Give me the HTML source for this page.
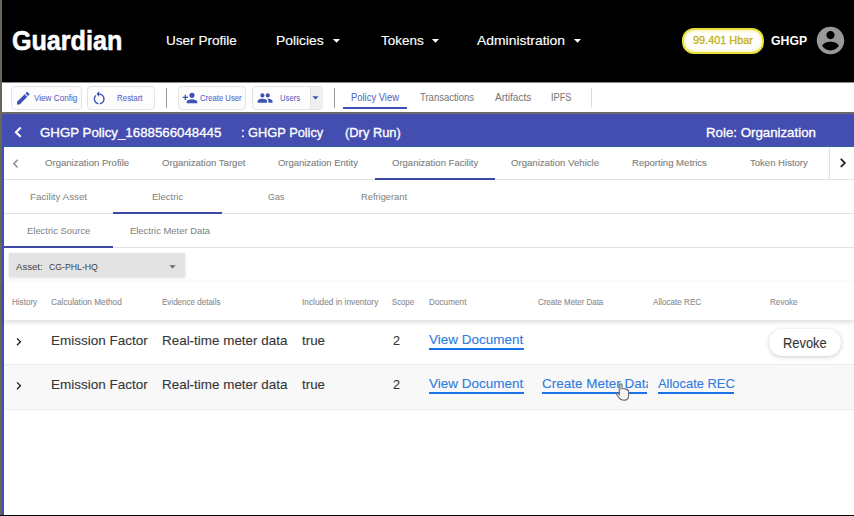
<!DOCTYPE html>
<html><head><meta charset="utf-8"><style>
html,body{margin:0;padding:0;width:854px;height:516px;overflow:hidden;background:#fff}
.t{position:absolute;font-family:"Liberation Sans",sans-serif;white-space:nowrap;line-height:1;transform-origin:0 0}
#w{position:absolute;left:0;top:0;width:854px;height:516px;overflow:hidden}
</style></head><body>
<div id="w">
<div style="position:absolute;left:0;top:0;width:2px;height:516px;background:#686559"></div>
<div style="position:absolute;left:2px;top:146px;width:2px;height:370px;background:#3c4fb8"></div>
<div style="position:absolute;left:2px;top:0;width:852px;height:82px;background:#000"></div>
<div style="position:absolute;left:2px;top:82px;width:852px;height:30px;background:#fff"></div>
<div style="position:absolute;left:2px;top:82px;width:852px;height:1px;background:#8a8a8a"></div>
<div style="position:absolute;left:2px;top:112px;width:852px;height:2px;background:#6a6a6a"></div>
<div style="position:absolute;left:2px;top:114px;width:852px;height:32px;background:#444eb0"></div>
<div style="position:absolute;left:2px;top:146px;width:852px;height:1px;background:#2a5f9e"></div>
<div style="position:absolute;left:4px;top:147px;width:850px;height:1px;background:#b9d2e6"></div>
<div style="position:absolute;left:4px;top:147px;width:850px;height:368px;background:#fff"></div>
<div style="position:absolute;left:0;top:515px;width:854px;height:1px;background:#000"></div>
<svg style="position:absolute;left:327.64000000000004px;top:31.8px;" width="17" height="17" viewBox="0 0 24 24"><path fill="#fff" d="M7 10l5 5 5-5z"/></svg>
<svg style="position:absolute;left:427.44px;top:31.8px;" width="17" height="17" viewBox="0 0 24 24"><path fill="#fff" d="M7 10l5 5 5-5z"/></svg>
<svg style="position:absolute;left:568.54px;top:31.8px;" width="17" height="17" viewBox="0 0 24 24"><path fill="#fff" d="M7 10l5 5 5-5z"/></svg>
<div style="position:absolute;left:681.5px;top:27.5px;width:78px;height:22px;border:2px solid #e6e03a;border-radius:12px;background:#fff;box-shadow:inset 0 0 3px 1px #f4f0a8"></div>
<svg style="position:absolute;left:813.5px;top:24.1px;" width="33" height="33" viewBox="0 0 24 24"><path fill="#999" d="M12 2C6.48 2 2 6.48 2 12s4.48 10 10 10 10-4.48 10-10S17.52 2 12 2zm0 3c1.66 0 3 1.34 3 3s-1.34 3-3 3-3-1.34-3-3 1.34-3 3-3zm0 14.2c-2.5 0-4.71-1.28-6-3.22.03-1.99 4-3.08 6-3.08 1.99 0 5.970 1.090 6 3.080-1.290 1.940-3.500 3.220-6 3.220z"/></svg>
<div style="position:absolute;left:11px;top:86.0px;width:68.5px;height:22.200000000000003px;border:1px solid #e3e3e3;border-radius:4px;background:#fdfdfd"></div>
<div style="position:absolute;left:87px;top:86.0px;width:66px;height:22.200000000000003px;border:1px solid #e3e3e3;border-radius:4px;background:#fdfdfd"></div>
<div style="position:absolute;left:177.5px;top:86.0px;width:66.9px;height:22.200000000000003px;border:1px solid #e3e3e3;border-radius:4px;background:#fdfdfd"></div>
<div style="position:absolute;left:252.3px;top:86.0px;width:68.39999999999998px;height:22.200000000000003px;border:1px solid #e3e3e3;border-radius:4px;background:#fdfdfd"></div>
<div style="position:absolute;left:309.6px;top:87.0px;width:12px;height:22.2px;background:#efefef;border-left:1px solid #e3e3e3;border-radius:0 4px 4px 0"></div>
<svg style="position:absolute;left:307.8px;top:89.75px;" width="15" height="15" viewBox="0 0 24 24"><path fill="#3f51b5" d="M7 10l5 5 5-5z"/></svg>
<svg style="position:absolute;left:15.2px;top:89.7px;" width="16.5" height="16.5" viewBox="0 0 24 24"><path fill="#3f51b5" d="M3 17.25V21h3.75L17.81 9.94l-3.75-3.75L3 17.25zM20.71 7.04c.39-.39.39-1.02 0-1.41l-2.34-2.34c-.39-.39-1.02-.39-1.41 0l-1.83 1.83 3.75 3.75 1.83-1.83z"/></svg>
<svg style="position:absolute;left:91.3px;top:89.7px;" width="16.4" height="16.4" viewBox="0 0 24 24"><path fill="#3f51b5" d="M12 5V2L8 6l4 4V7c3.31 0 6 2.690 6 6 0 2.970-2.170 5.430-5 5.910v2.020c3.950-.490 7-3.850 7-7.930 0-4.420-3.580-8-8-8zm-6 8c0-1.650.670-3.150 1.760-4.240L6.340 7.340C4.900 8.790 4 10.790 4 13c0 4.080 3.050 7.440 7 7.930v-2.020c-2.830-.480-5-2.940-5-5.910z"/></svg>
<svg style="position:absolute;left:182px;top:89.6px;" width="16" height="16" viewBox="0 0 24 24"><path fill="#3f51b5" d="M15 12c2.21 0 4-1.79 4-4s-1.79-4-4-4-4 1.79-4 4 1.79 4 4 4zm-9-2V7H4v3H1v2h3v3h2v-3h3v-2H6zm9 4c-2.67 0-8 1.34-8 4v2h16v-2c0-2.66-5.33-4-8-4z"/></svg>
<svg style="position:absolute;left:256.9px;top:89.7px;" width="16.2" height="16.2" viewBox="0 0 24 24"><path fill="#3f51b5" d="M16 11c1.66 0 2.99-1.34 2.99-3S17.66 5 16 5c-1.66 0-3 1.34-3 3s1.34 3 3 3zm-8 0c1.66 0 2.99-1.34 2.99-3S9.66 5 8 5C6.34 5 5 6.34 5 8s1.34 3 3 3zm0 2c-2.330 0-7 1.170-7 3.500V19h14v-2.500c0-2.330-4.670-3.500-7-3.500zm8 0c-.290 0-.620.020-.970.050 1.160.840 1.970 1.970 1.970 3.450V19h6v-2.500c0-2.330-4.670-3.500-7-3.500z"/></svg>
<div style="position:absolute;left:166.3px;top:88.3px;width:1px;height:19.4px;background:#999"></div>
<div style="position:absolute;left:333.6px;top:88.3px;width:1px;height:19.4px;background:#999"></div>
<div style="position:absolute;left:591px;top:88.3px;width:1px;height:19.4px;background:#ddd"></div>
<div style="position:absolute;left:342.5px;top:106.5px;width:64.5px;height:2px;background:#3f51b5"></div>
<svg style="position:absolute;left:8px;top:122.3px;" width="20.4" height="20.4" viewBox="0 0 24 24"><path fill="#fff" d="M15.41 7.41L14 6l-6 6 6 6 1.41-1.41L10.83 12z" stroke="#fff" stroke-width="0.7"/></svg>
<div style="position:absolute;left:4px;top:179px;width:850px;height:1px;background:#e2e2e2"></div>
<svg style="position:absolute;left:7.1px;top:154.6px;" width="17.4" height="17.4" viewBox="0 0 24 24"><path fill="#888" d="M15.41 7.41L14 6l-6 6 6 6 1.41-1.41L10.83 12z"/></svg>
<div style="position:absolute;left:375.4px;top:177.8px;width:119.6px;height:2px;background:#3d47a6"></div>
<div style="position:absolute;left:829px;top:147px;width:1px;height:32px;background:#e0e0e0;box-shadow:-1px 0 2px #eee"></div>
<svg style="position:absolute;left:833.8px;top:154.3px;overflow:visible" width="17.8" height="17.8" viewBox="0 0 24 24"><path fill="#222" d="M10 6L8.59 7.41 13.17 12l-4.58 4.59L10 18l6-6z" stroke="#222" stroke-width="0.6"/></svg>
<div style="position:absolute;left:4px;top:213px;width:850px;height:1px;background:#e2e2e2"></div>
<div style="position:absolute;left:113.1px;top:211.5px;width:108.6px;height:2px;background:#3d47a6"></div>
<div style="position:absolute;left:4px;top:246.5px;width:850px;height:1px;background:#e2e2e2"></div>
<div style="position:absolute;left:4px;top:245.5px;width:109px;height:2px;background:#3d47a6"></div>
<div style="position:absolute;left:8.9px;top:253px;width:176px;height:24px;background:#e3e3e3;box-shadow:0 1px 3px rgba(0,0,0,.12)"></div>
<svg style="position:absolute;left:164.6px;top:259.2px;" width="15" height="15" viewBox="0 0 24 24"><path fill="#666" d="M7 10l5 5 5-5z"/></svg>
<div style="position:absolute;left:4px;top:282px;width:850px;height:38px;background:#fff;box-shadow:0 2px 5px rgba(0,0,0,.15)"></div>
<div style="position:absolute;left:4px;top:364px;width:850px;height:1px;background:#ececec"></div>
<div style="position:absolute;left:4px;top:364.5px;width:850px;height:44px;background:#f8f8f8"></div>
<div style="position:absolute;left:4px;top:408.5px;width:850px;height:1px;background:#ececec"></div>
<svg style="position:absolute;left:11.1px;top:333.5px;" width="15.5" height="15.5" viewBox="0 0 24 24"><path fill="#1a1a1a" d="M10 6L8.59 7.41 13.17 12l-4.58 4.59L10 18l6-6z"/></svg>
<svg style="position:absolute;left:11.1px;top:377.5px;" width="15.5" height="15.5" viewBox="0 0 24 24"><path fill="#1a1a1a" d="M10 6L8.59 7.41 13.17 12l-4.58 4.59L10 18l6-6z"/></svg>
<div style="position:absolute;left:429.1px;top:347.6px;width:95px;height:2.3px;background:#1a73e8"></div>
<div style="position:absolute;left:429.1px;top:391.9px;width:95px;height:2.3px;background:#1a73e8"></div>
<div style="position:absolute;left:541.5px;top:391.9px;width:105.6px;height:2.3px;background:#1a73e8"></div>
<div style="position:absolute;left:657.7px;top:391.9px;width:76.6px;height:2.3px;background:#1a73e8"></div>
<div style="position:absolute;left:769.4px;top:329.3px;width:72px;height:26.3px;border-radius:13px;background:#fff;box-shadow:0 1px 4px rgba(0,0,0,.2),0 0 1px rgba(0,0,0,.08)"></div>
<div class="t" style="left:12.20px;top:27.00px;font-size:28px;font-weight:700;color:#fff;transform:scaleX(0.8967);-webkit-text-stroke:0.6px #fff">Guardian</div>
<div class="t" style="left:165.88px;top:34.00px;font-size:13.3px;font-weight:400;color:#fff;transform:scaleX(1.0191);-webkit-text-stroke:0.15px #fff">User Profile</div>
<div class="t" style="left:275.96px;top:34.00px;font-size:13.3px;font-weight:400;color:#fff;transform:scaleX(1.0400);-webkit-text-stroke:0.15px #fff">Policies</div>
<div class="t" style="left:380.80px;top:34.00px;font-size:13.3px;font-weight:400;color:#fff;transform:scaleX(1.0119);-webkit-text-stroke:0.15px #fff">Tokens</div>
<div class="t" style="left:477.20px;top:34.00px;font-size:13.3px;font-weight:400;color:#fff;transform:scaleX(1.0452);-webkit-text-stroke:0.15px #fff">Administration</div>
<div class="t" style="left:692.60px;top:35.10px;font-size:11px;font-weight:400;color:#c4b31c;transform:scaleX(0.9902);-webkit-text-stroke:0.35px #c4b31c">99.401 Hbar</div>
<div class="t" style="left:770.80px;top:35.20px;font-size:12.6px;font-weight:700;color:#fff;transform:scaleX(0.9730);-webkit-text-stroke:0px #fff">GHGP</div>
<div class="t" style="left:33.60px;top:92.60px;font-size:9.8px;font-weight:400;color:#5563c4;transform:scaleX(0.8308);-webkit-text-stroke:0.05px #5563c4">View Config</div>
<div class="t" style="left:116.80px;top:92.60px;font-size:9.8px;font-weight:400;color:#5563c4;transform:scaleX(0.8094);-webkit-text-stroke:0.05px #5563c4">Restart</div>
<div class="t" style="left:200.00px;top:92.60px;font-size:9.8px;font-weight:400;color:#5563c4;transform:scaleX(0.7887);-webkit-text-stroke:0.05px #5563c4">Create User</div>
<div class="t" style="left:279.70px;top:92.60px;font-size:9.8px;font-weight:400;color:#5563c4;transform:scaleX(0.7885);-webkit-text-stroke:0.05px #5563c4">Users</div>
<div class="t" style="left:350.90px;top:92.60px;font-size:10px;font-weight:400;color:#5563c4;transform:scaleX(0.9412);-webkit-text-stroke:0.05px #5563c4">Policy View</div>
<div class="t" style="left:419.50px;top:92.60px;font-size:10px;font-weight:400;color:#777;transform:scaleX(0.9491);-webkit-text-stroke:0.05px #777">Transactions</div>
<div class="t" style="left:494.60px;top:92.60px;font-size:10px;font-weight:400;color:#777;transform:scaleX(1.0028);-webkit-text-stroke:0.05px #777">Artifacts</div>
<div class="t" style="left:550.68px;top:92.60px;font-size:10px;font-weight:400;color:#777;transform:scaleX(0.9238);-webkit-text-stroke:0.05px #777">IPFS</div>
<div class="t" style="left:39.90px;top:125.90px;font-size:13.4px;font-weight:400;color:#fff;transform:scaleX(0.9918);-webkit-text-stroke:0.32px #fff">GHGP Policy_1688566048445</div>
<div class="t" style="left:241.04px;top:125.90px;font-size:13.4px;font-weight:400;color:#fff;transform:scaleX(0.9558);-webkit-text-stroke:0.32px #fff">: GHGP Policy</div>
<div class="t" style="left:345.20px;top:125.90px;font-size:13.4px;font-weight:400;color:#fff;transform:scaleX(0.9621);-webkit-text-stroke:0.32px #fff">(Dry Run)</div>
<div class="t" style="left:706.11px;top:125.90px;font-size:13.4px;font-weight:400;color:#fff;transform:scaleX(0.9909);-webkit-text-stroke:0.32px #fff">Role: Organization</div>
<div class="t" style="left:45.00px;top:157.90px;font-size:9.9px;font-weight:400;color:#808080;transform:scaleX(0.9701);-webkit-text-stroke:0.12px #808080">Organization Profile</div>
<div class="t" style="left:162.00px;top:157.90px;font-size:9.9px;font-weight:400;color:#808080;transform:scaleX(0.9698);-webkit-text-stroke:0.12px #808080">Organization Target</div>
<div class="t" style="left:278.30px;top:157.90px;font-size:9.9px;font-weight:400;color:#808080;transform:scaleX(0.9571);-webkit-text-stroke:0.12px #808080">Organization Entity</div>
<div class="t" style="left:391.60px;top:157.90px;font-size:9.9px;font-weight:400;color:#808080;transform:scaleX(0.9633);-webkit-text-stroke:0.12px #808080">Organization Facility</div>
<div class="t" style="left:511.20px;top:157.90px;font-size:9.9px;font-weight:400;color:#808080;transform:scaleX(0.9722);-webkit-text-stroke:0.12px #808080">Organization Vehicle</div>
<div class="t" style="left:631.80px;top:157.90px;font-size:9.9px;font-weight:400;color:#808080;transform:scaleX(0.9679);-webkit-text-stroke:0.12px #808080">Reporting Metrics</div>
<div class="t" style="left:749.60px;top:157.90px;font-size:9.9px;font-weight:400;color:#808080;transform:scaleX(0.9667);-webkit-text-stroke:0.12px #808080">Token History</div>
<div class="t" style="left:29.60px;top:191.80px;font-size:9.4px;font-weight:400;color:#808080;transform:scaleX(1.0436);-webkit-text-stroke:0.0px #808080">Facility Asset</div>
<div class="t" style="left:151.60px;top:191.80px;font-size:9.4px;font-weight:400;color:#808080;transform:scaleX(1.0161);-webkit-text-stroke:0.0px #808080">Electric</div>
<div class="t" style="left:267.90px;top:191.80px;font-size:9.4px;font-weight:400;color:#808080;transform:scaleX(0.9529);-webkit-text-stroke:0.0px #808080">Gas</div>
<div class="t" style="left:361.40px;top:191.80px;font-size:9.4px;font-weight:400;color:#808080;transform:scaleX(0.9915);-webkit-text-stroke:0.0px #808080">Refrigerant</div>
<div class="t" style="left:26.90px;top:225.60px;font-size:9.4px;font-weight:400;color:#808080;transform:scaleX(1.0048);-webkit-text-stroke:0.0px #808080">Electric Source</div>
<div class="t" style="left:129.80px;top:225.60px;font-size:9.4px;font-weight:400;color:#808080;transform:scaleX(1.0037);-webkit-text-stroke:0.0px #808080">Electric Meter Data</div>
<div class="t" style="left:16.40px;top:262.90px;font-size:9.3px;font-weight:400;color:#404040;transform:scaleX(1.0320);-webkit-text-stroke:0px #404040">Asset:</div>
<div class="t" style="left:49.20px;top:262.90px;font-size:9.3px;font-weight:400;color:#404040;transform:scaleX(0.9365);-webkit-text-stroke:0px #404040">CG-PHL-HQ</div>
<div class="t" style="left:11.70px;top:298.10px;font-size:8.3px;font-weight:400;color:#8c8c8c;transform:scaleX(0.9731);-webkit-text-stroke:0.1px #8c8c8c">History</div>
<div class="t" style="left:51.00px;top:298.10px;font-size:8.3px;font-weight:400;color:#8c8c8c;transform:scaleX(0.9972);-webkit-text-stroke:0.1px #8c8c8c">Calculation Method</div>
<div class="t" style="left:162.30px;top:298.10px;font-size:8.3px;font-weight:400;color:#8c8c8c;transform:scaleX(0.9672);-webkit-text-stroke:0.1px #8c8c8c">Evidence details</div>
<div class="t" style="left:302.10px;top:298.10px;font-size:8.3px;font-weight:400;color:#8c8c8c;transform:scaleX(1.0026);-webkit-text-stroke:0.1px #8c8c8c">Included in inventory</div>
<div class="t" style="left:392.40px;top:298.10px;font-size:8.3px;font-weight:400;color:#8c8c8c;transform:scaleX(0.9333);-webkit-text-stroke:0.1px #8c8c8c">Scope</div>
<div class="t" style="left:429.10px;top:298.10px;font-size:8.3px;font-weight:400;color:#8c8c8c;transform:scaleX(0.9895);-webkit-text-stroke:0.1px #8c8c8c">Document</div>
<div class="t" style="left:537.90px;top:298.10px;font-size:8.3px;font-weight:400;color:#8c8c8c;transform:scaleX(0.9565);-webkit-text-stroke:0.1px #8c8c8c">Create Meter Data</div>
<div class="t" style="left:652.70px;top:298.10px;font-size:8.3px;font-weight:400;color:#8c8c8c;transform:scaleX(0.9755);-webkit-text-stroke:0.1px #8c8c8c">Allocate REC</div>
<div class="t" style="left:769.60px;top:298.10px;font-size:8.3px;font-weight:400;color:#8c8c8c;transform:scaleX(0.9786);-webkit-text-stroke:0.1px #8c8c8c">Revoke</div>
<div class="t" style="left:50.55px;top:335.00px;font-size:12.8px;font-weight:400;color:#363636;transform:scaleX(1.0538);-webkit-text-stroke:0.1px #363636">Emission Factor</div>
<div class="t" style="left:161.85px;top:335.00px;font-size:12.8px;font-weight:400;color:#363636;transform:scaleX(1.0496);-webkit-text-stroke:0.1px #363636">Real-time meter data</div>
<div class="t" style="left:302.20px;top:335.00px;font-size:12.8px;font-weight:400;color:#363636;transform:scaleX(1.0455);-webkit-text-stroke:0.1px #363636">true</div>
<div class="t" style="left:392.80px;top:335.00px;font-size:12.8px;font-weight:400;color:#363636;transform:scaleX(0.9857);-webkit-text-stroke:0.1px #363636">2</div>
<div class="t" style="left:429.10px;top:334.30px;font-size:12.8px;font-weight:400;color:#2f7be0;transform:scaleX(1.0544);-webkit-text-stroke:0.1px #2f7be0">View Document</div>
<div class="t" style="left:50.55px;top:379.40px;font-size:12.8px;font-weight:400;color:#363636;transform:scaleX(1.0538);-webkit-text-stroke:0.1px #363636">Emission Factor</div>
<div class="t" style="left:161.85px;top:379.40px;font-size:12.8px;font-weight:400;color:#363636;transform:scaleX(1.0496);-webkit-text-stroke:0.1px #363636">Real-time meter data</div>
<div class="t" style="left:302.20px;top:379.40px;font-size:12.8px;font-weight:400;color:#363636;transform:scaleX(1.0455);-webkit-text-stroke:0.1px #363636">true</div>
<div class="t" style="left:392.80px;top:379.40px;font-size:12.8px;font-weight:400;color:#363636;transform:scaleX(0.9857);-webkit-text-stroke:0.1px #363636">2</div>
<div class="t" style="left:429.10px;top:378.20px;font-size:12.8px;font-weight:400;color:#2f7be0;transform:scaleX(1.0544);-webkit-text-stroke:0.1px #2f7be0">View Document</div>
<div style="position:absolute;left:0;top:0;width:647.5px;height:516px;overflow:hidden"><div class="t" style="left:541.50px;top:378.20px;font-size:12.8px;font-weight:400;color:#2f7be0;transform:scaleX(1.0544);-webkit-text-stroke:0.1px #2f7be0">Create Meter Data</div></div>
<div class="t" style="left:657.70px;top:378.20px;font-size:12.8px;font-weight:400;color:#2f7be0;transform:scaleX(1.0079);-webkit-text-stroke:0.1px #2f7be0">Allocate REC</div>
<div class="t" style="left:783.07px;top:336.90px;font-size:13.8px;font-weight:400;color:#333;transform:scaleX(0.9348);-webkit-text-stroke:0.1px #333">Revoke</div>
<svg style="position:absolute;left:610px;top:378px" width="26" height="26" viewBox="0 0 26 26"><path d="M9.3 7.2Q9.3 5.9 10.7 5.9Q12.1 5.9 12.1 7.2L12.1 10.6Q13 10.2 15.2 10.9Q18.6 11.8 18.6 13.8L18.6 17.8Q18.6 22.2 14.2 22.2Q10.6 22.2 8.6 19.2L6.6 16.3Q6.1 15.2 7.3 15.1Q8.4 15.2 9.3 16.4Z" fill="#f4f4f4" stroke="#6a6a6a" stroke-width="1.1"/><path d="M9.9 7.3Q10.7 6.6 11.5 7.3L11.5 11.5L9.9 12.5Z" fill="#b8b8b8"/></svg>
</div>
<div style="position:absolute;left:0;top:515px;width:854px;height:1px;background:#000"></div>
</body></html>
